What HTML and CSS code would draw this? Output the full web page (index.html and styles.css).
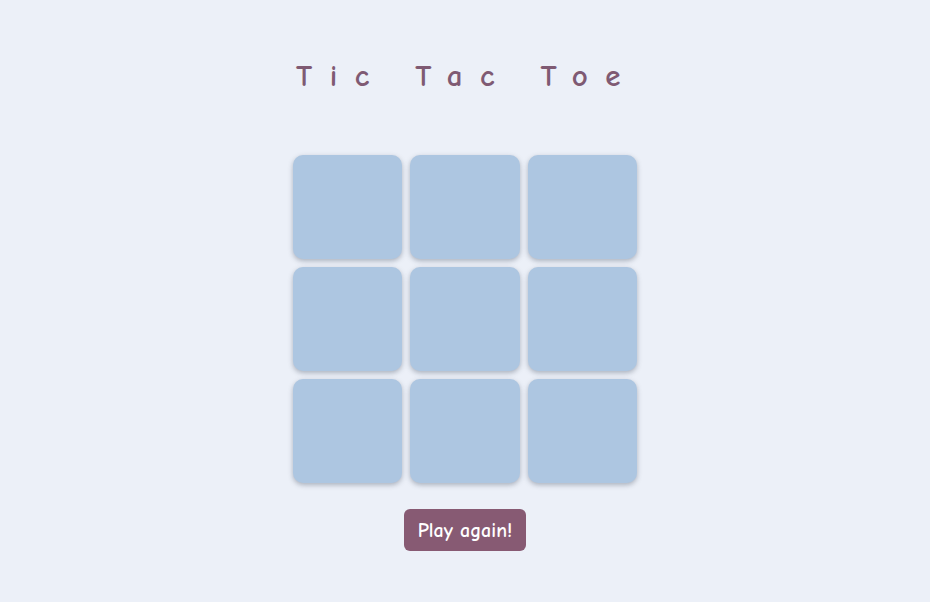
FILE: index.html
```html
<!DOCTYPE html>
<html>
<head>
<meta charset="utf-8">
<link rel="stylesheet" href="styles.css">
</head>
<body>
<main class="game">
  <h1 class="title">Tic Tac Toe</h1>
  <div class="board">
    <div class="cell"></div><div class="cell"></div><div class="cell"></div>
    <div class="cell"></div><div class="cell"></div><div class="cell"></div>
    <div class="cell"></div><div class="cell"></div><div class="cell"></div>
  </div>
  <button class="again">Play again!</button>
</main>
</body>
</html>
```
FILE: styles.css
```css
html, body {
  margin: 0;
  padding: 0;
}
body {
  background: #ecf0f8;
  font-family: "Comic Sans MS", "Comic Neue", "Lato", "DejaVu Sans", sans-serif;
  width: 930px;
  height: 602px;
}
.game {
  display: flex;
  flex-direction: column;
  align-items: center;
  padding-top: 56px;
}
.title {
  margin: 0;
  font-size: 31px;
  font-weight: bold;
  color: #7f5a73;
  letter-spacing: 17.5px;
  padding-left: 4px;
  line-height: 40px;
}
.board {
  margin-top: 59px;
  display: grid;
  grid-template-columns: repeat(3, 109.6px);
  grid-template-rows: repeat(3, 104px);
  gap: 8px;
}
.cell {
  background: #adc6e1;
  border-radius: 10px;
  box-shadow: 0 2px 5px rgba(50, 60, 80, 0.35);
}
.again {
  margin-top: 26px;
  width: 122px;
  height: 42px;
  border: none;
  border-radius: 6px;
  background: #875a73;
  color: #ffffff;
  font-family: inherit;
  font-size: 20px;
  font-weight: bold;
  padding: 0;
}
```
